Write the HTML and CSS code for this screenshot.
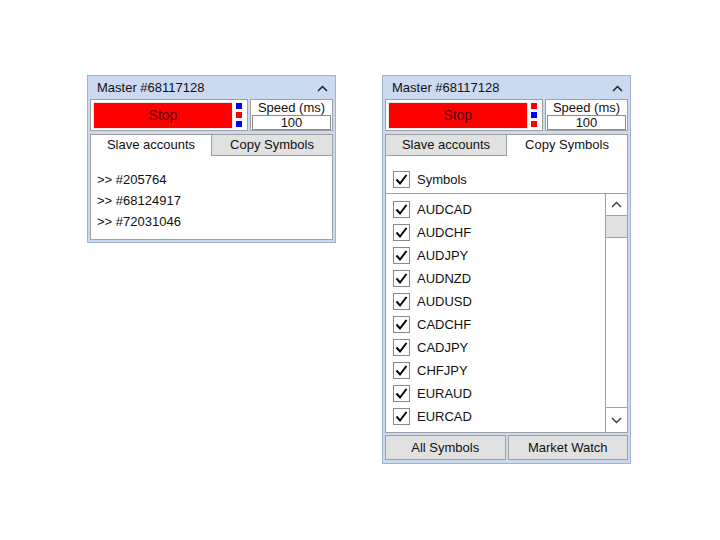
FILE: index.html
```html
<!DOCTYPE html>
<html>
<head>
	<title>Trade Copier</title>
	<link rel="stylesheet" href="styles.css">
</head>
<body>
	<div class="desk">
		<div class="panel">
			<div class="panel-head">
				<span>Master #68117128</span>
				<svg class="caret" width="11" height="7" viewBox="0 0 11 7"><polyline points="1,6 5.5,1.5 10,6" fill="none" stroke="#222" stroke-width="1.5"/></svg>
			</div>
			<div class="controls">
				<div class="stop-box">
					<div class="stop-btn">Stop</div>
					<div class="leds">
						<span class="led blue"></span>
						<span class="led red"></span>
						<span class="led blue"></span>
					</div>
				</div>
				<div class="speed-box">
					<div class="speed-label">Speed (ms)</div>
					<div class="speed-input">100</div>
				</div>
			</div>
			<div class="tabs-box">
				<div class="tab-row">
					<div class="tab active">Slave accounts</div>
					<div class="tab idle right">Copy Symbols</div>
				</div>
				<div class="slaves">
					<div class="slave">&gt;&gt; #205764</div>
					<div class="slave">&gt;&gt; #68124917</div>
					<div class="slave">&gt;&gt; #72031046</div>
				</div>
			</div>
		</div>

		<div class="panel">
			<div class="panel-head">
				<span>Master #68117128</span>
				<svg class="caret" width="11" height="7" viewBox="0 0 11 7"><polyline points="1,6 5.5,1.5 10,6" fill="none" stroke="#222" stroke-width="1.5"/></svg>
			</div>
			<div class="controls">
				<div class="stop-box">
					<div class="stop-btn">Stop</div>
					<div class="leds">
						<span class="led red"></span>
						<span class="led blue"></span>
						<span class="led red"></span>
					</div>
				</div>
				<div class="speed-box">
					<div class="speed-label">Speed (ms)</div>
					<div class="speed-input">100</div>
				</div>
			</div>
			<div class="tabs-box open">
				<div class="tab-row">
					<div class="tab idle left">Slave accounts</div>
					<div class="tab active">Copy Symbols</div>
				</div>
				<div class="check-row all">
					<span class="check"><svg width="15" height="15" viewBox="0 0 15 15"><polyline points="2.5,7.5 6,11.5 12.5,3" fill="none" stroke="#000" stroke-width="2"/></svg></span>
					<span>Symbols</span>
				</div>
			</div>
			<div class="symbol-list">
				<div class="symbols" id="symbols"></div>
				<div class="scrollbar">
					<div class="sb-btn up"><svg width="11" height="7" viewBox="0 0 11 7"><polyline points="1,6 5.5,1.5 10,6" fill="none" stroke="#333" stroke-width="1.3"/></svg></div>
					<div class="sb-thumb"></div>
					<div class="sb-track"></div>
					<div class="sb-btn down"><svg width="11" height="7" viewBox="0 0 11 7"><polyline points="1,1 5.5,5.5 10,1" fill="none" stroke="#333" stroke-width="1.3"/></svg></div>
				</div>
			</div>
			<div class="bottom-btns">
				<div class="btn">All Symbols</div>
				<div class="btn">Market Watch</div>
			</div>
		</div>
	</div>

	<script>
		const symbols = ['AUDCAD', 'AUDCHF', 'AUDJPY', 'AUDNZD', 'AUDUSD', 'CADCHF', 'CADJPY', 'CHFJPY', 'EURAUD', 'EURCAD'];
		const list = document.getElementById('symbols');
		symbols.forEach(name => {
			const row = document.createElement('div');
			row.className = 'check-row';
			row.innerHTML = '<span class="check"><svg width="15" height="15" viewBox="0 0 15 15"><polyline points="2.5,7.5 6,11.5 12.5,3" fill="none" stroke="#000" stroke-width="2"/></svg></span>';
			const label = document.createElement('span');
			label.textContent = name;
			row.appendChild(label);
			list.appendChild(row);
		});
	</script>
</body>
</html>
```

FILE: styles.css
```css
body {
	margin: 0;
	background: #fff;
	font-family: "Liberation Sans", Arial, sans-serif;
	font-size: 13px;
	color: #111;
}
.desk {
	display: flex;
	align-items: flex-start;
	gap: 46px;
	padding: 75px 0 0 87px;
}
.panel {
	box-sizing: border-box;
	width: 249px;
	border: 1px solid #a3b3cb;
	background: #cbdaf0;
	padding: 0 2px 2px 2px;
}
.panel-head {
	height: 22px;
	display: flex;
	align-items: center;
	justify-content: space-between;
	padding: 0 5px 0 7px;
}
.caret {
	margin-top: 2px;
}
.controls {
	display: flex;
	gap: 2px;
	height: 32px;
	margin-top: 1px;
}
.stop-box {
	box-sizing: border-box;
	width: 158px;
	border: 1px solid #a0a0a0;
	background: #fff;
	display: flex;
	align-items: center;
	padding: 0 2px;
	gap: 3px;
}
.stop-btn {
	box-sizing: border-box;
	width: 140px;
	height: 27px;
	background: #ff0000;
	border: 1px solid #e8e8e8;
	color: #500000;
	font-size: 14px;
	display: flex;
	align-items: center;
	justify-content: center;
}
.leds {
	display: flex;
	flex-direction: column;
	gap: 3px;
}
.led {
	width: 6px;
	height: 6px;
}
.led.blue {
	background: #0000ff;
}
.led.red {
	background: #ff0000;
}
.speed-box {
	box-sizing: border-box;
	flex: 1;
	border: 1px solid #a0a0a0;
	background: #fff;
	padding: 0 1px 1px 1px;
	display: flex;
	flex-direction: column;
}
.speed-label {
	text-align: center;
	height: 15px;
	line-height: 15px;
}
.speed-input {
	box-sizing: border-box;
	flex: 1;
	border: 1px solid #8a8a8a;
	text-align: center;
	line-height: 13px;
}
.tabs-box {
	box-sizing: border-box;
	margin-top: 3px;
	border: 1px solid #a0a0a0;
	background: #fff;
	height: 106px;
}
.tabs-box.open {
	height: auto;
	border-bottom: none;
}
.tab-row {
	display: flex;
	height: 21px;
}
.tab {
	box-sizing: border-box;
	flex: 1;
	text-align: center;
	line-height: 20px;
}
.tab.idle {
	background: #e1e1e1;
	border-bottom: 1px solid #a0a0a0;
}
.tab.right {
	border-left: 1px solid #a0a0a0;
}
.tab.left {
	border-right: 1px solid #a0a0a0;
}
.slaves {
	padding: 13px 0 0 6px;
}
.slave {
	height: 21px;
	line-height: 21px;
}
.check-row {
	display: flex;
	align-items: center;
	gap: 7px;
	height: 23px;
	padding-left: 7px;
}
.check-row.all {
	height: 17px;
	padding-top: 15px;
	padding-bottom: 5px;
}
.check {
	box-sizing: border-box;
	width: 17px;
	height: 17px;
	border: 1px solid #888;
	background: #fff;
	display: flex;
}
.symbol-list {
	box-sizing: border-box;
	height: 240px;
	border: 1px solid #a0a0a0;
	background: #fff;
	display: flex;
}
.symbols {
	flex: 1;
	padding-top: 4px;
}
.scrollbar {
	width: 21px;
	border-left: 1px solid #a0a0a0;
	display: flex;
	flex-direction: column;
}
.sb-btn {
	display: flex;
	align-items: center;
	justify-content: center;
}
.sb-btn.up {
	height: 21px;
	border-bottom: 1px solid #a0a0a0;
}
.sb-btn.down {
	height: 24px;
	border-top: 1px solid #a0a0a0;
}
.sb-thumb {
	height: 21px;
	background: #e1e1e1;
	border-bottom: 1px solid #a0a0a0;
}
.sb-track {
	flex: 1;
}
.bottom-btns {
	display: flex;
	gap: 2px;
	margin: 2px 0 1px 0;
}
.btn {
	box-sizing: border-box;
	flex: 1;
	height: 25px;
	line-height: 23px;
	text-align: center;
	background: #e1e1e1;
	border: 1px solid #a0a0a0;
}
```
